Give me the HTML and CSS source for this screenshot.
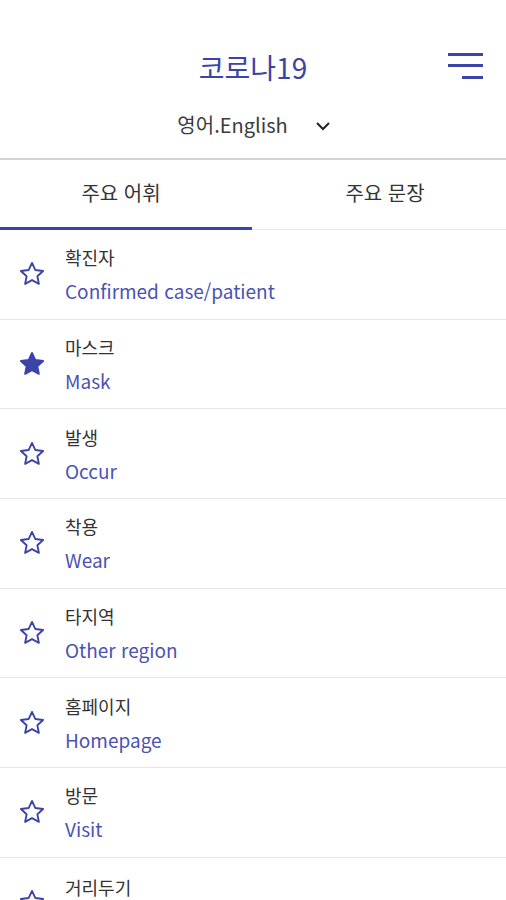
FILE: index.html
```html
<!DOCTYPE html>
<html lang="ko">
<head>
  <meta charset="UTF-8">
  <meta name="viewport" content="width=device-width, initial-scale=1.0">
  <title>코로나19</title>
  <link rel="stylesheet" href="styles.css">
</head>
<body>
  <header class="top">
    <h1 class="title">코로나19</h1>
    <svg class="menu" width="36" height="28" viewBox="0 0 36 28">
      <rect x="0" y="0" width="35" height="3" fill="#3b44a8"/>
      <rect x="0" y="11" width="35" height="3" fill="#3b44a8"/>
      <rect x="14" y="23" width="21" height="3" fill="#3b44a8"/>
    </svg>
    <div class="lang">
      <span>영어.English</span>
      <svg class="chev" width="16" height="10" viewBox="0 0 16 10">
        <polyline points="2,2 8,8 14,2" fill="none" stroke="#222" stroke-width="2"/>
      </svg>
    </div>
  </header>

  <nav class="tabs">
    <div class="tab active">주요 어휘</div>
    <div class="tab second">주요 문장</div>
  </nav>

  <ul class="words">
    <li class="word">
      <svg class="star" viewBox="0 0 24 24"><path d="M12 2.5l2.9 6.1 6.6.8-4.9 4.5 1.3 6.6L12 17.2l-5.9 3.3 1.3-6.6-4.9-4.5 6.6-.8z"/></svg>
      <div class="text"><div class="ko">확진자</div><div class="en">Confirmed case/patient</div></div>
    </li>
    <li class="word">
      <svg class="star on" viewBox="0 0 24 24"><path d="M12 2.5l2.9 6.1 6.6.8-4.9 4.5 1.3 6.6L12 17.2l-5.9 3.3 1.3-6.6-4.9-4.5 6.6-.8z"/></svg>
      <div class="text"><div class="ko">마스크</div><div class="en">Mask</div></div>
    </li>
    <li class="word">
      <svg class="star" viewBox="0 0 24 24"><path d="M12 2.5l2.9 6.1 6.6.8-4.9 4.5 1.3 6.6L12 17.2l-5.9 3.3 1.3-6.6-4.9-4.5 6.6-.8z"/></svg>
      <div class="text"><div class="ko">발생</div><div class="en">Occur</div></div>
    </li>
    <li class="word">
      <svg class="star" viewBox="0 0 24 24"><path d="M12 2.5l2.9 6.1 6.6.8-4.9 4.5 1.3 6.6L12 17.2l-5.9 3.3 1.3-6.6-4.9-4.5 6.6-.8z"/></svg>
      <div class="text"><div class="ko">착용</div><div class="en">Wear</div></div>
    </li>
    <li class="word">
      <svg class="star" viewBox="0 0 24 24"><path d="M12 2.5l2.9 6.1 6.6.8-4.9 4.5 1.3 6.6L12 17.2l-5.9 3.3 1.3-6.6-4.9-4.5 6.6-.8z"/></svg>
      <div class="text"><div class="ko">타지역</div><div class="en">Other region</div></div>
    </li>
    <li class="word">
      <svg class="star" viewBox="0 0 24 24"><path d="M12 2.5l2.9 6.1 6.6.8-4.9 4.5 1.3 6.6L12 17.2l-5.9 3.3 1.3-6.6-4.9-4.5 6.6-.8z"/></svg>
      <div class="text"><div class="ko">홈페이지</div><div class="en">Homepage</div></div>
    </li>
    <li class="word">
      <svg class="star" viewBox="0 0 24 24"><path d="M12 2.5l2.9 6.1 6.6.8-4.9 4.5 1.3 6.6L12 17.2l-5.9 3.3 1.3-6.6-4.9-4.5 6.6-.8z"/></svg>
      <div class="text"><div class="ko">방문</div><div class="en">Visit</div></div>
    </li>
    <li class="word last">
      <svg class="star" viewBox="0 0 24 24"><path d="M12 2.5l2.9 6.1 6.6.8-4.9 4.5 1.3 6.6L12 17.2l-5.9 3.3 1.3-6.6-4.9-4.5 6.6-.8z"/></svg>
      <div class="text"><div class="ko">거리두기</div></div>
    </li>
  </ul>
</body>
</html>
```

FILE: styles.css
```css
html, body {
  margin: 0;
  padding: 0;
  background: #fff;
  overflow: hidden;
}
body {
  font-family: "Noto Sans CJK KR", "Noto Sans", sans-serif;
  color: #333;
}
.top {
  position: relative;
  padding: 48px 0 18px;
  text-align: center;
  border-bottom: 2px solid #d4d4d4;
}
.title {
  margin: 0;
  font-size: 28px;
  line-height: 38px;
  font-weight: 400;
  color: #3b44a8;
}
.menu {
  position: absolute;
  top: 53px;
  left: 448px;
}
.lang {
  margin-top: 24px;
  height: 30px;
  display: flex;
  justify-content: center;
  align-items: center;
  gap: 27px;
  padding-left: 2px;
  font-size: 20px;
  line-height: 30px;
  color: #3c3c3c;
}
.chev {
  margin-top: 2px;
}
.tabs {
  display: flex;
  height: 70px;
}
.tab {
  flex: 1;
  display: flex;
  align-items: center;
  justify-content: center;
  padding-bottom: 4px;
  padding-right: 10px;
  font-size: 20px;
  font-weight: 400;
  color: #333;
  border-bottom: 1px solid #ececec;
  box-sizing: border-box;
}
.tab.second {
  padding-right: 0;
  padding-left: 12px;
}
.tab.active {
  border-bottom: 3px solid #3b44a8;
  padding-bottom: 2px;
}
.words {
  list-style: none;
  margin: 0;
  padding: 0;
}
.word {
  display: flex;
  align-items: center;
  height: 89.7px;
  box-sizing: border-box;
  border-bottom: 1px solid #e6e6e6;
}
.word.last {
  align-items: flex-start;
}
.word.last .star {
  margin-top: 30px;
}
.word.last .text {
  padding-top: 16px;
}
.star {
  width: 28px;
  height: 28px;
  margin: 0 19px 0 18px;
  fill: none;
  stroke: #3b44a8;
  stroke-width: 1.6;
  stroke-linejoin: round;
}
.star.on {
  fill: #3b44a8;
}
.ko {
  font-size: 18px;
  line-height: 26px;
  color: #333;
}
.en {
  margin-top: 8px;
  font-size: 19px;
  line-height: 26px;
  color: #4a53b3;
}
```
